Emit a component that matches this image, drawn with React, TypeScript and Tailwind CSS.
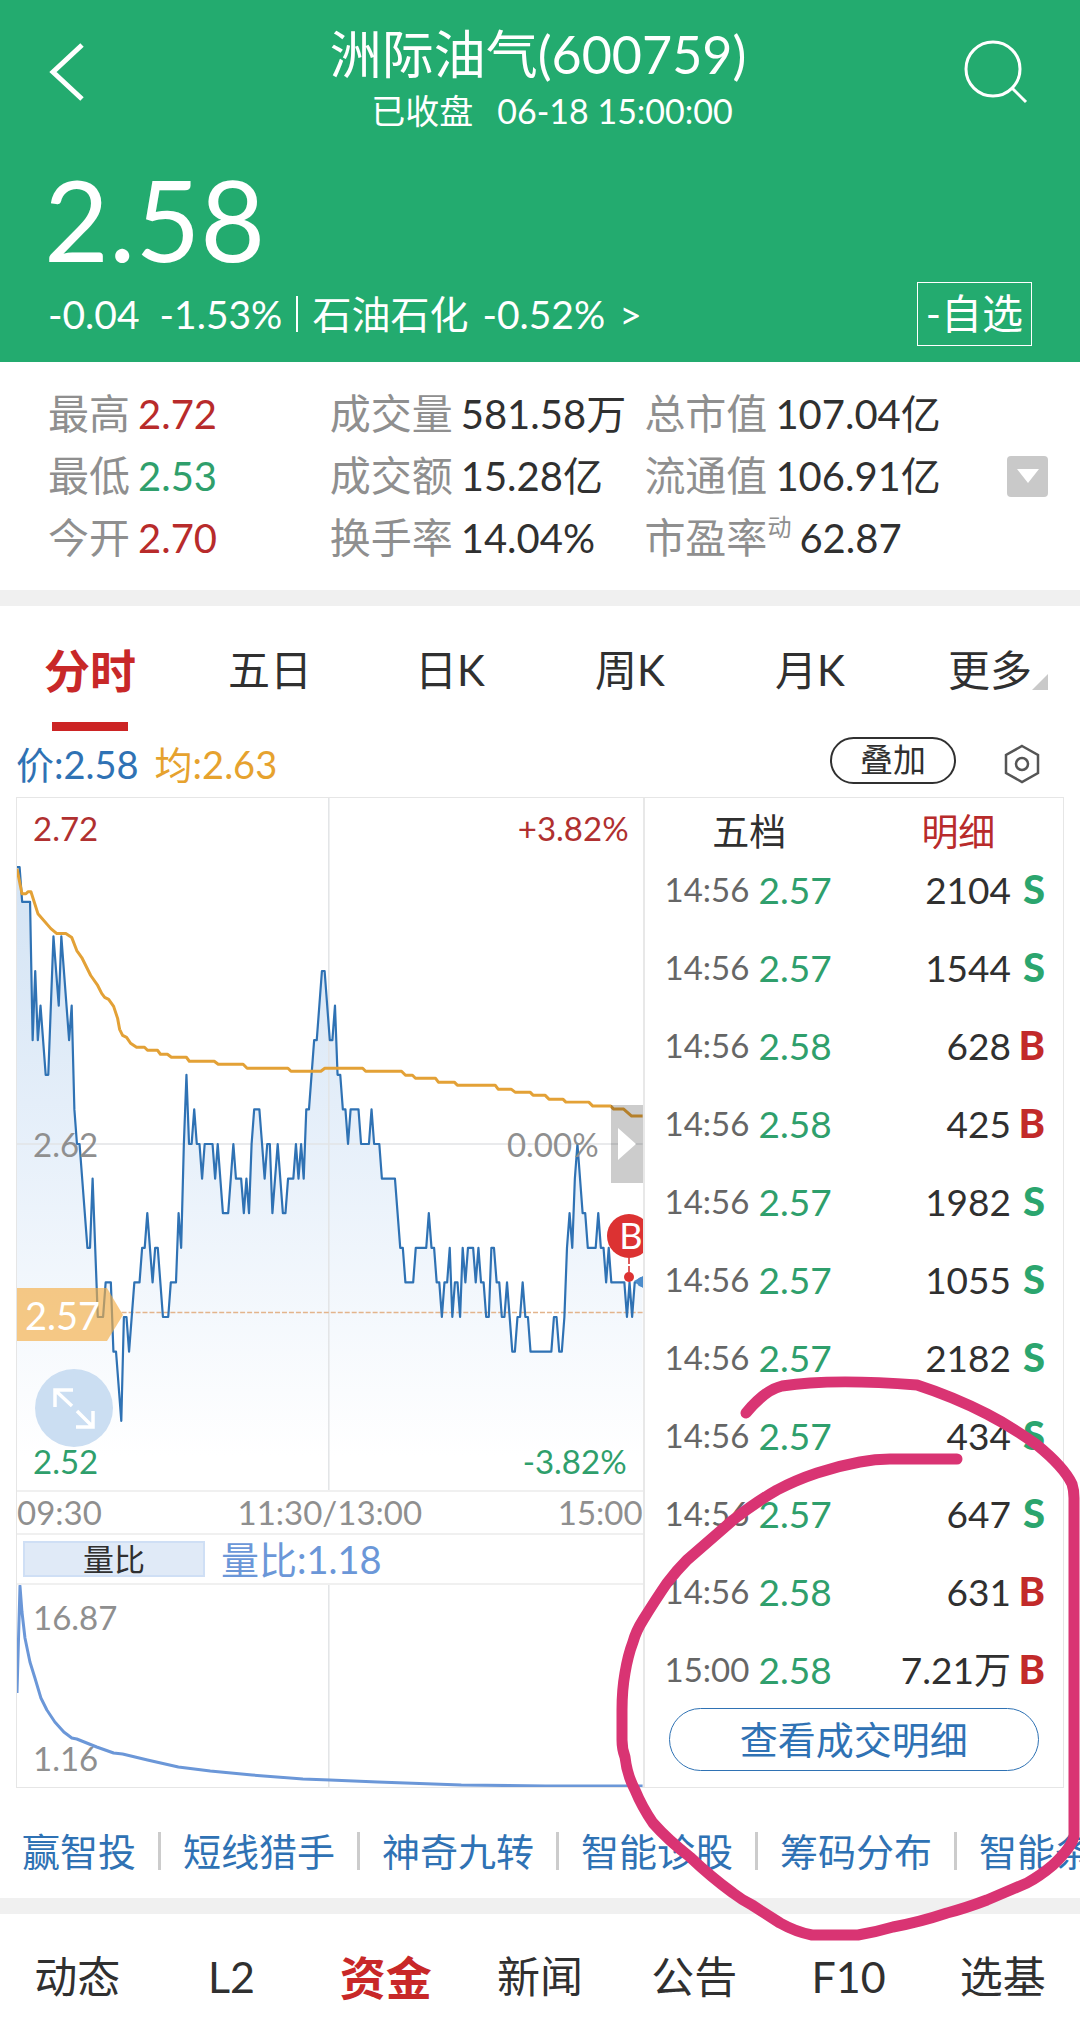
import clsx from 'clsx';

type Side = 'S' | 'B';

interface Trade {
  time: string;
  price: string;
  volume: string;
  side: Side;
}

interface Stat {
  label: string;
  note?: string;
  value: string;
  tone?: 'up' | 'down';
}

const stats: Stat[] = [
  { label: '最高', value: '2.72', tone: 'up' },
  { label: '成交量', value: '581.58万' },
  { label: '总市值', value: '107.04亿' },
  { label: '最低', value: '2.53', tone: 'down' },
  { label: '成交额', value: '15.28亿' },
  { label: '流通值', value: '106.91亿' },
  { label: '今开', value: '2.70', tone: 'up' },
  { label: '换手率', value: '14.04%' },
  { label: '市盈率', note: '动', value: '62.87' },
];

const periods = ['分时', '五日', '日K', '周K', '月K', '更多'];
const tools = ['赢智投', '短线猎手', '神奇九转', '智能诊股', '筹码分布', '智能条件单'];
const sections = ['动态', 'L2', '资金', '新闻', '公告', 'F10', '选基'];

const trades: Trade[] = [
  { time: '14:56', price: '2.57', volume: '2104', side: 'S' },
  { time: '14:56', price: '2.57', volume: '1544', side: 'S' },
  { time: '14:56', price: '2.58', volume: '628', side: 'B' },
  { time: '14:56', price: '2.58', volume: '425', side: 'B' },
  { time: '14:56', price: '2.57', volume: '1982', side: 'S' },
  { time: '14:56', price: '2.57', volume: '1055', side: 'S' },
  { time: '14:56', price: '2.57', volume: '2182', side: 'S' },
  { time: '14:56', price: '2.57', volume: '434', side: 'S' },
  { time: '14:56', price: '2.57', volume: '647', side: 'S' },
  { time: '14:56', price: '2.58', volume: '631', side: 'B' },
  { time: '15:00', price: '2.58', volume: '7.21万', side: 'B' },
];

// [trading minute, price in cents]
const prices: [number, number][] = [
  [0, 270], [1, 270], [2, 269], [5, 269], [6, 265], [7, 267], [8, 265], [9, 266], [11, 264], [12, 264],
  [14, 268], [16, 266], [17, 268], [20, 265], [21, 266], [22, 263], [23, 262], [24, 262], [27, 259], [28, 259],
  [29, 261], [31, 257], [33, 257], [34, 258], [36, 258], [37, 256], [38, 256], [40, 254], [41, 257], [42, 257],
  [43, 256], [45, 258], [47, 258], [48, 259], [49, 259], [50, 260], [52, 258], [53, 259], [54, 259], [56, 257],
  [58, 257], [59, 258], [61, 258], [62, 260], [63, 259], [64, 262], [65, 264], [66, 262], [67, 262], [68, 263],
  [69, 262], [70, 262], [71, 261], [72, 262], [75, 262], [76, 261], [77, 262], [79, 260], [81, 260], [83, 262],
  [84, 261], [86, 261], [87, 260], [88, 261], [89, 260], [90, 262], [91, 263], [93, 263], [94, 262], [95, 261],
  [96, 262], [97, 262], [98, 260], [100, 262], [102, 260], [103, 260], [104, 261], [106, 261], [107, 262], [108, 261],
  [109, 262], [110, 261], [111, 263], [112, 263], [114, 265], [115, 265], [117, 267], [118, 267], [120, 265], [121, 265],
  [122, 266], [123, 264], [124, 264], [125, 263], [126, 263], [127, 262], [128, 263], [131, 263], [132, 262], [135, 262],
  [136, 263], [137, 262], [139, 262], [140, 261], [145, 261], [147, 259], [148, 259], [149, 258], [152, 258], [153, 259],
  [157, 259], [158, 260], [159, 259], [160, 259], [161, 258], [162, 258], [163, 257], [164, 258], [165, 258], [166, 259],
  [167, 257], [168, 258], [169, 258], [170, 257], [171, 259], [172, 258], [173, 259], [175, 259], [176, 258], [177, 259],
  [178, 258], [179, 258], [180, 257], [181, 257], [182, 259], [183, 259], [184, 258], [185, 258], [186, 257], [187, 257],
  [188, 258], [190, 256], [191, 256], [192, 257], [193, 257], [194, 258], [195, 257], [196, 257], [197, 256], [205, 256],
  [206, 257], [207, 257], [208, 256], [209, 256], [210, 257], [211, 259], [212, 260], [213, 259], [214, 261], [215, 262],
  [217, 260], [218, 260], [219, 259], [222, 259], [223, 260], [224, 259], [225, 259], [226, 258], [227, 259], [228, 258],
  [233, 258], [234, 257], [235, 258], [236, 257], [237, 258], [240, 258],
];

const CHART_W = 628;
const CHART_H = 694;

const priceLine = prices
  .map(([m, p]) => `${((m / 240) * CHART_W).toFixed(1)},${(((272 - p) / 20) * CHART_H).toFixed(1)}`)
  .join(' ');

const averageLine =
  '0,71 5,96 9,96 11,94 14,94 21,116 34,131 40,136 49,136 55,140 60,153 65,160 74,178 81,188 85,196 88,200 92,202 97,209 101,221 103,232 106,238 110,240 114,246 120,250 128,250 131,253 141,253 144,257 151,257 155,260 170,260 173,264 198,264 202,267 227,267 231,271 272,271 275,274 305,274 309,271 347,271 350,274 386,274 390,278 397,278 400,281 420,281 423,285 439,285 442,288 480,288 483,292 496,292 500,295 515,295 518,298 530,298 534,302 548,302 551,305 574,305 578,309 596,309 599,312 609,312 617,319 628,319';

const ratioLine =
  '0,108 3,1 5,27 8,53 13,77 18,93 24,113 30,125 38,137 47,147 55,153 60,154 80,162 97,168 106,169 131,175 162,182 194,186 236,190 287,194 314,195 362,197 446,200 531,201 628,201';

function Header() {
  return (
    <header className="bg-[#23ab6f] text-white">
      <div className="flex h-36 items-center justify-between pl-12 pr-13">
        <button type="button" aria-label="返回" className="w-16">
          <svg className="h-[60px] w-10" viewBox="0 0 40 60" fill="none" stroke="currentColor" strokeWidth="5">
            <path d="M34 3 L5 30 L34 57" />
          </svg>
        </button>
        <div className="flex flex-col items-center pt-3">
          <h1 className="flex h-16 items-center text-[52px]">洲际油气(600759)</h1>
          <p className="flex h-12 items-center gap-6 pl-7 text-[34px]">
            <span>已收盘</span>
            <span>06-18 15:00:00</span>
          </p>
        </div>
        <button type="button" aria-label="搜索">
          <svg className="size-16" viewBox="0 0 64 64" fill="none" stroke="currentColor" strokeWidth="3">
            <circle cx="29" cy="29" r="27" />
            <path d="M48 48 L62 62" />
          </svg>
        </button>
      </div>
      <div className="flex h-[138px] items-center pl-11 pt-3 text-[112px] leading-none">2.58</div>
      <div className="flex h-20 items-start justify-between px-12">
        <div className="flex h-16 items-center text-[39px]">
          <span>-0.04</span>
          <span className="ml-5">-1.53%</span>
          <span className="mx-3.5 h-9 w-0.5 bg-white" />
          <a href="#sector" className="flex gap-3.5">
            <span>石油石化</span>
            <span>-0.52%</span>
            <span>&gt;</span>
          </a>
        </div>
        <button type="button" className="flex h-16 items-center border border-white px-2 text-[41px]">
          -自选
        </button>
      </div>
    </header>
  );
}

function StatPanel() {
  return (
    <section className="flex h-[228px] items-center justify-between pl-12 pr-8">
      <dl className="grid flex-1 grid-cols-[282fr_315fr_363fr]">
        {stats.map((s) => (
          <div key={s.label} className="flex h-[62px] items-center whitespace-nowrap">
            <dt className="flex text-[41px] text-[#8f8f8f]">
              {s.label}
              {s.note && <sup className="top-0 mt-2 text-2xl leading-none">{s.note}</sup>}
            </dt>
            <dd
              className={clsx(
                'ml-2 text-[40px]',
                s.tone === 'up' && 'text-[#b82b2b]',
                s.tone === 'down' && 'text-[#2f9f6c]',
                !s.tone && 'text-[#303030]',
              )}
            >
              {s.value}
            </dd>
          </div>
        ))}
      </dl>
      <button type="button" aria-label="展开" className="flex size-[41px] items-center justify-center rounded bg-[#c9c9c9]">
        <svg className="h-3.5 w-[22px]" viewBox="0 0 22 14" fill="#fff">
          <path d="M0 0 H22 L11 14 Z" />
        </svg>
      </button>
    </section>
  );
}

function PeriodTabs() {
  return (
    <nav className="grid grid-cols-6">
      {periods.map((p, i) => (
        <button key={p} type="button" className="flex flex-col items-center pt-3">
          <span
            className={clsx(
              'relative flex h-26 items-center',
              i === 0 ? 'text-[46px] font-bold text-[#c82828]' : 'text-[42px] text-[#303030]',
            )}
          >
            {p}
            {p === '更多' && (
              <svg className="absolute bottom-8 left-full size-4" viewBox="0 0 16 16" fill="#c9c9c9">
                <path d="M16 0 V16 H0 Z" />
              </svg>
            )}
          </span>
          <span className={clsx('h-[9px] w-[76px]', i === 0 && 'bg-[#cc2424]')} />
        </button>
      ))}
    </nav>
  );
}

function QuoteBar() {
  return (
    <div className="flex h-[66px] items-center justify-between pl-4 pr-10">
      <p className="flex gap-4 text-[38px]">
        <span className="text-[#2f72b4]">价:2.58</span>
        <span className="text-[#e6a22e]">均:2.63</span>
      </p>
      <div className="flex items-center gap-12">
        <button
          type="button"
          className="mb-2 flex h-[47px] items-center rounded-full border-2 border-[#303030] px-7 text-[33px] text-[#303030]"
        >
          叠加
        </button>
        <button type="button" aria-label="设置">
          <svg className="h-10 w-9" viewBox="0 0 36 40" fill="none" stroke="#555" strokeWidth="2.5">
            <path d="M18 2 L34 11 V29 L18 38 L2 29 V11 Z" />
            <circle cx="18" cy="20" r="6" />
          </svg>
        </button>
      </div>
    </div>
  );
}

function PriceChart() {
  return (
    <div className="relative h-[692px] overflow-hidden text-[33px] leading-none">
      <svg className="block h-full w-full" viewBox="0 0 628 694" preserveAspectRatio="none" fill="none">
        <defs>
          <linearGradient id="area" x1="0" y1="0" x2="0" y2="694" gradientUnits="userSpaceOnUse">
            <stop offset="0.1" stopColor="#d3e3f4" />
            <stop offset="0.5" stopColor="#e7f0fa" />
            <stop offset="0.95" stopColor="#ffffff" />
          </linearGradient>
        </defs>
        <polygon points={`0,694 ${priceLine} 628,694`} fill="url(#area)" />
        <path d="M0 347 H628 M313 0 V694" stroke="#e2e4e6" strokeWidth="1.5" />
        <path d="M105 516 H628" stroke="#e3b48c" strokeWidth="1.5" strokeDasharray="5 2" />
        <polyline points={priceLine} stroke="#2f72b4" strokeWidth="2.2" strokeLinejoin="round" />
        <polyline points={averageLine} stroke="#e3a136" strokeWidth="3" strokeLinejoin="round" />
      </svg>

      <span className="absolute left-4 top-3.5 text-[#b03030]">2.72</span>
      <span className="absolute right-3.5 top-3.5 text-[#b03030]">+3.82%</span>
      <span className="absolute left-4 top-[330px] text-[#8f8f8f]">2.62</span>
      <span className="absolute right-11 top-[330px] text-[#8f8f8f]">0.00%</span>
      <span className="absolute bottom-3 left-4 text-[#2f9f6c]">2.52</span>
      <span className="absolute bottom-3 right-4 text-[#2f9f6c]">-3.82%</span>

      <div className="absolute left-0 top-[490px] flex h-[53px] w-[106px] items-center pl-2 text-white">
        <svg className="absolute inset-0 h-full w-full" viewBox="0 0 106 53" preserveAspectRatio="none">
          <path d="M0 0 H90 L106 27 L90 53 H0 Z" fill="#f5ae45" fillOpacity="0.65" />
        </svg>
        <span className="relative text-[38px]">2.57</span>
      </div>

      <button
        type="button"
        aria-label="全屏"
        className="absolute left-[18px] top-[571px] flex size-[78px] items-center justify-center rounded-full bg-[#cbdef2]"
      >
        <svg className="size-11" viewBox="0 0 44 44" fill="none" stroke="#fff" strokeWidth="3.5">
          <path d="M3 21 V4 H21 M4 5 L20 20 M25 25 L40 40 M41 25 V41 H24" />
        </svg>
      </button>

      <button
        type="button"
        aria-label="收起盘口"
        className="absolute right-0 top-[307px] flex h-[78px] w-8 items-center justify-center bg-black/20"
      >
        <svg className="h-8 w-[18px]" viewBox="0 0 18 32" fill="#fff">
          <path d="M0 0 L18 16 L0 32 Z" />
        </svg>
      </button>

      {/* Buy point marker, partly hidden by the chart edge */}
      <svg className="absolute -right-2 top-[416px] h-[76px] w-11" viewBox="0 0 44 76">
        <path d="M27 67 L36 62 V74 Z" fill="#4c8ccb" />
        <circle cx="35" cy="68" r="5" fill="#4c8ccb" />
        <path d="M22 44 V60" stroke="#df5a5a" strokeWidth="2" strokeDasharray="6 2" />
        <circle cx="22" cy="63" r="5" fill="#dc3232" />
        <circle cx="22" cy="22" r="22" fill="#dc3232" />
        <text x="24" y="35" textAnchor="middle" fontSize="36" fill="#fff">
          B
        </text>
      </svg>
    </div>
  );
}

function RatioChart() {
  return (
    <div>
      <div className="flex h-[50px] items-center gap-4 border-b-2 border-[#f0f0f0] pl-1.5">
        <button
          type="button"
          className="flex h-9 w-[182px] items-center justify-center border-2 border-[#cfdff5] bg-[#e0eaf7] text-[31px] text-[#303030]"
        >
          量比
        </button>
        <span className="text-[38px] leading-none text-[#6b97d8]">量比:1.18</span>
      </div>
      <div className="relative h-[202px] text-[33px] leading-none text-[#8f8f8f]">
        <svg className="block h-full w-full" viewBox="0 0 628 202" preserveAspectRatio="none" fill="none">
          <path d="M313 0 V202" stroke="#e2e4e6" strokeWidth="1.5" />
          <polyline points={ratioLine} stroke="#6b97d8" strokeWidth="3" strokeLinejoin="round" />
        </svg>
        <span className="absolute left-4 top-4">16.87</span>
        <span className="absolute bottom-3 left-4">1.16</span>
      </div>
    </div>
  );
}

function TradePanel() {
  return (
    <aside className="flex flex-col">
      <div className="grid h-[52px] grid-cols-2 pt-3.5 text-[37px] leading-none">
        <button type="button" className="text-[#303030]">
          五档
        </button>
        <button type="button" className="text-[#b82b2b]">
          明细
        </button>
      </div>
      <table className="w-full table-fixed">
        <tbody>
          {trades.map((t, i) => (
            <tr key={i} className="h-[78px] whitespace-nowrap leading-none">
              <td className="w-[114px] pl-5 text-[33px] text-[#666]">{t.time}</td>
              <td className="w-24 text-[37px] text-[#2f9f6c]">{t.price}</td>
              <td className="text-right text-[37px] text-[#303030]">{t.volume}</td>
              <td
                className={clsx(
                  'w-[52px] pr-[18px] text-right text-[40px] font-black',
                  t.side === 'S' ? 'text-[#2ba56e]' : 'text-[#c22a2a]',
                )}
              >
                {t.side}
              </td>
            </tr>
          ))}
        </tbody>
      </table>
      <button
        type="button"
        className="mx-6 mb-4 flex h-[63px] items-center justify-center rounded-full border border-[#2f72b4] text-[38px] text-[#2f72b4]"
      >
        查看成交明细
      </button>
    </aside>
  );
}

function ToolLinks() {
  return (
    <nav className="flex h-[110px] items-center overflow-hidden whitespace-nowrap pt-4 text-[38px] text-[#2f72b4]">
      {tools.map((t, i) => (
        <a key={t} href="#tool" className="flex shrink-0 items-center">
          {i > 0 && <span className="h-[38px] w-[3px] bg-[#ccc]" />}
          <span className="px-[22px]">{t}</span>
        </a>
      ))}
    </nav>
  );
}

function SectionTabs() {
  return (
    <nav className="grid h-[111px] grid-cols-7 pt-4">
      {sections.map((s) => (
        <button
          key={s}
          type="button"
          className={clsx(
            'flex items-center justify-center',
            s === '资金' ? 'text-[46px] font-bold text-[#c82828]' : 'text-[43px] text-[#303030]',
          )}
        >
          {s}
        </button>
      ))}
    </nav>
  );
}

// Hand-drawn ring around the last trades
function PenMark() {
  return (
    <svg
      className="pointer-events-none absolute inset-0 h-full w-full"
      viewBox="0 0 1080 2025"
      preserveAspectRatio="none"
      fill="none"
      stroke="#d93473"
      strokeWidth="11"
      strokeLinecap="round"
      strokeLinejoin="round"
    >
      <path d="M746 1413 Q765 1390 782 1386 Q796 1384 810 1383 Q853 1380 917 1385 Q954 1397 987 1414 Q1014 1428 1037 1445 Q1064 1467 1072 1484 Q1074 1490 1074 1498 V1836 Q1072 1847 1053 1865 Q1040 1876 1027 1883 L987 1900 Q966 1908 947 1913 Q920 1922 893 1927 Q876 1932 858 1935 H812 Q796 1932 780 1923 L752 1905 Q742 1900 733 1893 Q711 1877 690 1857 Q668 1840 653 1823 Q642 1807 635 1790 Q627 1775 625 1757 Q622 1749 622 1740 V1710 Q622 1690 625 1673 Q628 1655 633 1642 Q636 1631 643 1620 Q656 1599 667 1583 Q677 1570 687 1560 L733 1520 Q756 1502 777 1490 Q796 1480 817 1473 Q838 1466 860 1462 Q875 1459 890 1459 H957" />
    </svg>
  );
}

export default function App() {
  return (
    <div className="relative overflow-hidden bg-white font-[Lato,'Noto_Sans_CJK_SC',sans-serif]">
      <Header />
      <StatPanel />
      <div className="h-4 bg-[#f0f0f0]" />
      <PeriodTabs />
      <QuoteBar />
      <main className="mx-4 grid grid-cols-[3fr_2fr] border border-[#e6e6e6]">
        <div className="border-r-2 border-[#e8e8e8]">
          <PriceChart />
          <div className="flex h-[45px] items-center justify-between border-y-2 border-[#f0f0f0] text-[33px] text-[#8f8f8f]">
            <span>09:30</span>
            <span>11:30/13:00</span>
            <span>15:00</span>
          </div>
          <RatioChart />
        </div>
        <TradePanel />
      </main>
      <ToolLinks />
      <div className="h-4 bg-[#f0f0f0]" />
      <SectionTabs />
      <PenMark />
    </div>
  );
}
